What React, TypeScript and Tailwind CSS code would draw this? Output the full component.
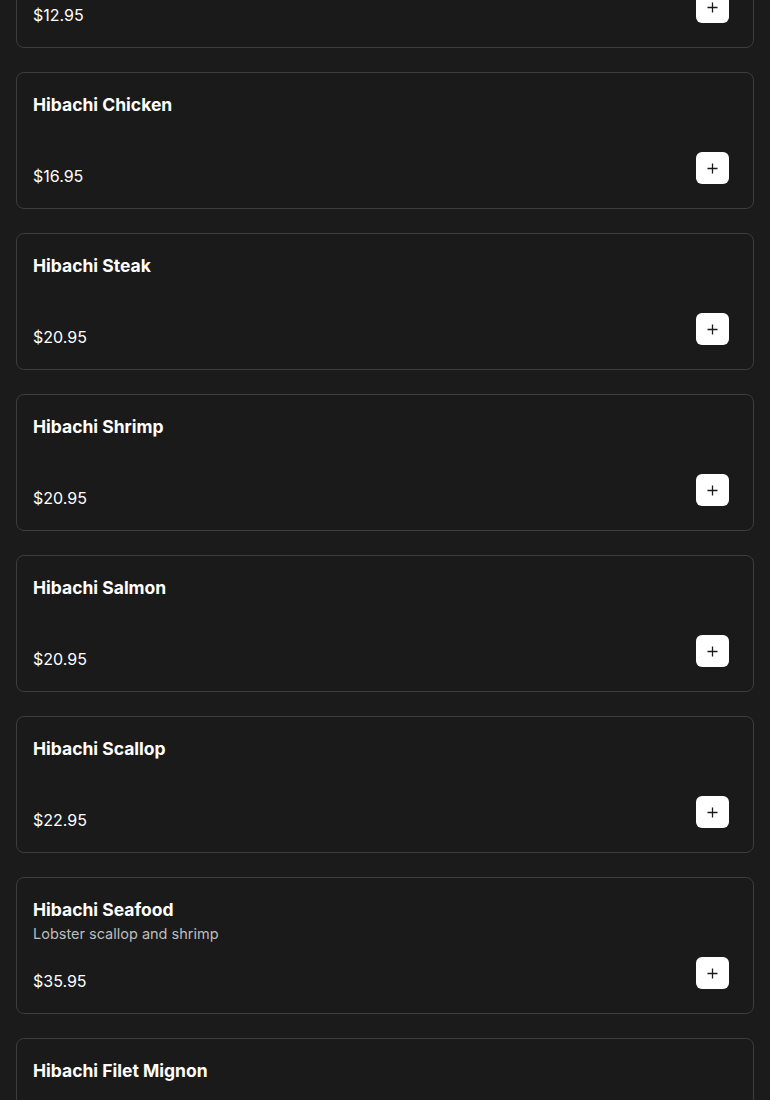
const items = [
  { name: 'Hibachi Vegetable', price: '$12.95' },
  { name: 'Hibachi Chicken', price: '$16.95' },
  { name: 'Hibachi Steak', price: '$20.95' },
  { name: 'Hibachi Shrimp', price: '$20.95' },
  { name: 'Hibachi Salmon', price: '$20.95' },
  { name: 'Hibachi Scallop', price: '$22.95' },
  { name: 'Hibachi Seafood', desc: 'Lobster scallop and shrimp', price: '$35.95' },
  { name: 'Hibachi Filet Mignon', price: '$29.95' },
]

function PlusIcon() {
  return (
    <svg width="11" height="11" viewBox="0 0 11 11" fill="none" stroke="#1a1a1a" strokeWidth="1.3">
      <path d="M5.5 0.5v10M0.5 5.5h10" />
    </svg>
  )
}

function MenuCard({ name, desc, price }: { name: string; desc?: string; price: string }) {
  return (
    <div className="h-[137px] flex flex-col p-4 rounded-lg border border-[#3d3d3d] bg-[#1a1a1a]">
      <div className="mt-[2px] text-[17.5px] leading-7 font-bold text-white">{name}</div>
      {desc && <div className="text-[14.5px] leading-5 text-[#bdbdbd]">{desc}</div>}
      <div className="mt-auto pb-[2px] flex items-end justify-between">
        <span className="text-base leading-7 text-white">{price}</span>
        <button className="w-[33px] h-[32px] mr-[8px] mb-[6px] rounded-md bg-white flex items-center justify-center">
          <PlusIcon />
        </button>
      </div>
    </div>
  )
}

export default function App() {
  return (
    <div className="min-h-screen bg-[#1b1b1b] overflow-hidden font-['Inter',sans-serif]">
      <div className="px-4 -mt-[89px] flex flex-col gap-6">
        {items.map(item => (
          <MenuCard key={item.name} {...item} />
        ))}
      </div>
    </div>
  )
}
